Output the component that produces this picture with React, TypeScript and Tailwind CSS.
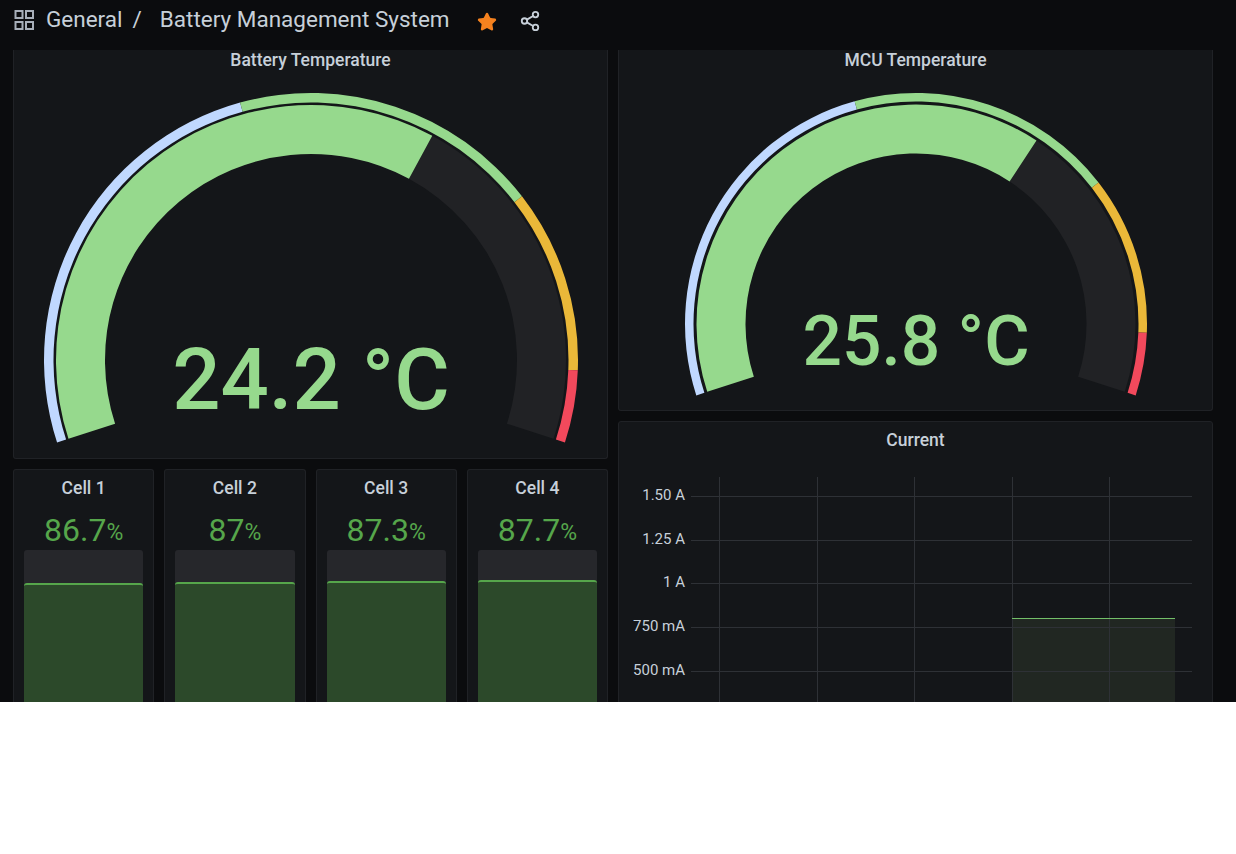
import React from 'react';
import { Share2, Star } from 'lucide-react';

const FONT = "font-['Roboto',sans-serif]";

// angle in degrees, clockwise from the top of the dial
const polar = (cx: number, cy: number, r: number, a: number) => {
  const rad = (a * Math.PI) / 180;
  return [cx + r * Math.sin(rad), cy - r * Math.cos(rad)];
};

const bandPath = (cx: number, cy: number, r0: number, r1: number, a0: number, a1: number) => {
  const [x0, y0] = polar(cx, cy, r1, a0);
  const [x1, y1] = polar(cx, cy, r1, a1);
  const [x2, y2] = polar(cx, cy, r0, a1);
  const [x3, y3] = polar(cx, cy, r0, a0);
  const large = a1 - a0 > 180 ? 1 : 0;
  return `M${x0} ${y0}A${r1} ${r1} 0 ${large} 1 ${x1} ${y1}L${x2} ${y2}A${r0} ${r0} 0 ${large} 0 ${x3} ${y3}Z`;
};

const START = -108;
const END = 108;
const THRESHOLDS = [
  { from: -108, to: -15.4, color: '#c0d8ff' },
  { from: -15.4, to: 52.2, color: '#96d98d' },
  { from: 52.2, to: 92.2, color: '#eab839' },
  { from: 92.2, to: 108, color: '#f2495c' },
];

type GaugeProps = {
  height: number;
  cx: number;
  cy: number;
  radius: number;
  bandWidth: number;
  valueOuter: number;
  valueInner: number;
  valueAngle: number;
  text: string;
  textY: number;
  fontSize: number;
};

function Gauge({ height, cx, cy, radius, bandWidth, valueOuter, valueInner, valueAngle, text, textY, fontSize }: GaugeProps) {
  return (
    <svg width={593} height={height} className="block">
      {THRESHOLDS.map((t) => (
        <path key={t.color} d={bandPath(cx, cy, radius - bandWidth, radius, t.from, t.to)} fill={t.color} />
      ))}
      <path d={bandPath(cx, cy, valueInner, valueOuter, valueAngle, END)} fill="#212225" />
      <path d={bandPath(cx, cy, valueInner, valueOuter, START, valueAngle)} fill="#96d98d" />
      <text x={cx} y={textY} textAnchor="middle" fontSize={fontSize} fontWeight={500} fill="#96d98d" fontFamily="Roboto, sans-serif">
        {text}
      </text>
    </svg>
  );
}

function Panel({ title, className, children }: { title: string; className: string; children: React.ReactNode }) {
  return (
    <div className={`bg-[#141619] border border-t-0 border-[#202226] rounded-b-[3px] ${className}`}>
      <div className="h-[20px] pt-[2px] flex items-center justify-center text-[17.5px] leading-none font-medium text-[#c7d0d9] whitespace-nowrap">
        {title}
      </div>
      {children}
    </div>
  );
}

const CELLS = [
  { name: 'Cell 1', value: 86.7 },
  { name: 'Cell 2', value: 87 },
  { name: 'Cell 3', value: 87.3 },
  { name: 'Cell 4', value: 87.7 },
];

function CellPanel({ name, value }: { name: string; value: number }) {
  // bar scale: 3px per percent, Cell 1 sits 33px below the track top
  const top = Math.round(33 - (value - 86.7) * 3);
  return (
    <div className="bg-[#141619] border border-[#202226] border-b-0 rounded-t-[3px] h-[300px] px-[10px]">
      <div className="h-[35px] pt-[2px] flex items-center justify-center text-[17.5px] font-medium text-[#c7d0d9]">{name}</div>
      <div className="h-[45px] flex items-center justify-center text-[#56a64b] pt-[5px]">
        <span className="text-[32px] leading-none">{value}</span>
        <span className="text-[23px] leading-none mt-[4px]">%</span>
      </div>
      <div className="relative h-[248px] bg-[#26272b] rounded-[3px]">
        <div
          className="absolute left-0 right-0 bottom-0 bg-[#2c492a] border-t-2 border-[#56a64b] rounded-t-[3px]"
          style={{ top }}
        />
      </div>
    </div>
  );
}

const Y_TICKS = [
  { label: '1.50 A', y: 496.5 },
  { label: '1.25 A', y: 540.5 },
  { label: '1 A', y: 583.5 },
  { label: '750 mA', y: 627.5 },
  { label: '500 mA', y: 671.5 },
];
const X_TICKS = [719.5, 817.5, 914.5, 1012.5, 1109.5];

function CurrentChart() {
  // drawn in page coordinates, shifted to the panel origin
  const ox = 619;
  const oy = 458;
  return (
    <svg width={593} height={260} className="block">
      <g transform={`translate(${-ox} ${-oy})`}>
        <rect x={1012} y={618} width={163} height={100} fill="#212722" />
        {Y_TICKS.map((t) => (
          <g key={t.label}>
            <line x1={691} x2={1192} y1={t.y} y2={t.y} stroke="#2e3136" />
            <text x={685} y={t.y + 3} textAnchor="end" fontSize={15} fill="#c7d0d9" fontFamily="Roboto, sans-serif">
              {t.label}
            </text>
          </g>
        ))}
        {X_TICKS.map((x) => (
          <line key={x} x1={x} x2={x} y1={477} y2={720} stroke="#2e3136" />
        ))}
        <line x1={1012} x2={1175} y1={618.5} y2={618.5} stroke="#73bf69" />
      </g>
    </svg>
  );
}

export default function App() {
  return (
    <div className={`h-[702px] overflow-hidden flex flex-col bg-[#0b0c0e] ${FONT}`}>
      <header className="h-[50px] shrink-0 flex items-center pl-[14px] pb-[12px] text-[#c7d0d9]">
        <svg width={20} height={20} viewBox="0 0 20 20" fill="none" stroke="#a8afb9" strokeWidth={2} className="mt-[1px]">
          <rect x={1.5} y={1} width={7} height={7} />
          <rect x={12} y={1} width={7} height={7} />
          <rect x={1.5} y={12} width={7} height={7} />
          <rect x={12} y={12} width={7} height={7} />
        </svg>
        <span className="ml-[12px] text-[22.5px] leading-none">General</span>
        <span className="ml-[10px] text-[22.5px] leading-none">/</span>
        <span className="ml-[18px] text-[22.5px] leading-none">Battery Management System</span>
        <Star size={20} className="ml-[27px] mt-[5px] text-[#f5821f]" fill="#f5821f" />
        <Share2 size={22} className="ml-[22px] mt-[4px] text-[#c7d0d9]" />
      </header>
      <main className="flex-1 min-h-0 flex gap-[10px] pl-[13px]">
        <div className="w-[595px] flex flex-col gap-[10px]">
          <Panel title="Battery Temperature" className="h-[409px] shrink-0">
            <Gauge
              height={388}
              cx={297}
              cy={290}
              radius={267}
              bandWidth={9.5}
              valueOuter={255}
              valueInner={206}
              valueAngle={28.4}
              text="24.2 °C"
              textY={339}
              fontSize={85}
            />
          </Panel>
          <div className="grid grid-cols-4 gap-[10px]">
            {CELLS.map((c) => (
              <CellPanel key={c.name} name={c.name} value={c.value} />
            ))}
          </div>
        </div>
        <div className="w-[595px] flex flex-col gap-[10px]">
          <Panel title="MCU Temperature" className="h-[361px] shrink-0">
            <Gauge
              height={340}
              cx={297}
              cy={254}
              radius={231}
              bandWidth={8.5}
              valueOuter={219.5}
              valueInner={170.5}
              valueAngle={33.3}
              text="25.8 °C"
              textY={295}
              fontSize={69.5}
            />
          </Panel>
          <div className="h-[300px] shrink-0 bg-[#141619] border border-[#202226] rounded-[3px]">
            <div className="h-[36px] pt-[8px] text-center text-[17.5px] leading-[20px] font-medium text-[#c7d0d9]">Current</div>
            <CurrentChart />
          </div>
        </div>
      </main>
    </div>
  );
}
